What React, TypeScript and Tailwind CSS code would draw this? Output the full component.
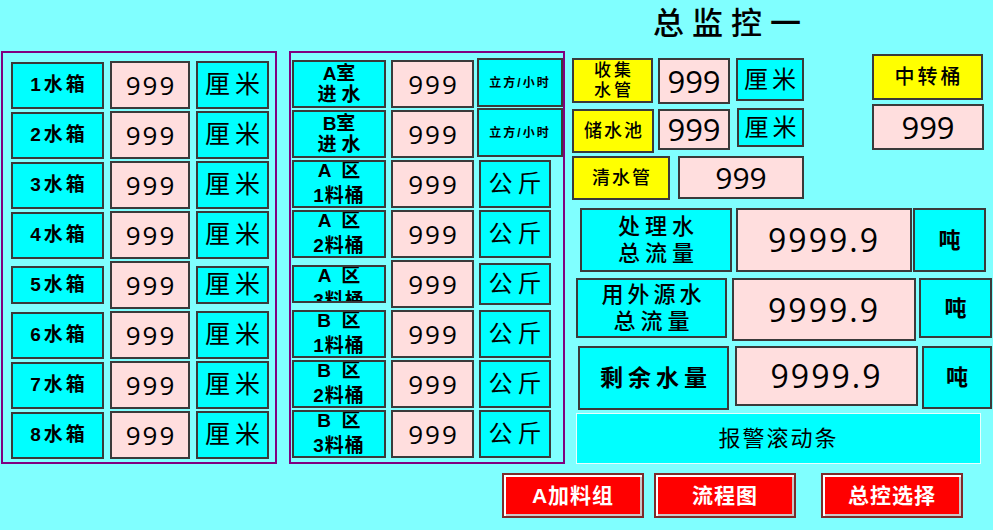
import React from "react";

// Panel colours of the monitoring screen
const cjk = "font-['Liberation_Sans','Noto_Sans_CJK_SC',sans-serif]";
const num = "font-['Open_Sans','DejaVu_Sans',sans-serif] font-medium";
const box = "flex shrink-0 items-center justify-center border-2 border-[#3a3a3a] overflow-hidden whitespace-nowrap";
const cyan = "bg-[#00ffff]";
const pink = "bg-[#ffdede]";
const yellow = "bg-[#ffff00]";

type Cell = { cls?: string; children?: React.ReactNode };

const Box = ({ cls = "", children }: Cell) => <div className={`${box} ${cls}`}>{children}</div>;

const Num = ({ v, cls = "text-[26px] tracking-[2px] pl-[2px]" }: { v: string; cls?: string }) => (
    <span className={`${num} ${cls} leading-none text-black`}>{v}</span>
);

// left panel: water tanks
const tanks = [1, 2, 3, 4, 5, 6, 7, 8];

// middle panel: inlet flows and material bins
const bins = [
    { a: "A室", b: "进水", unit: "立方/小时" },
    { a: "B室", b: "进水", unit: "立方/小时" },
    { a: "A  区", b: "1料桶", unit: "公斤" },
    { a: "A  区", b: "2料桶", unit: "公斤" },
    { a: "A  区", b: "3料桶", unit: "公斤" },
    { a: "B  区", b: "1料桶", unit: "公斤" },
    { a: "B  区", b: "2料桶", unit: "公斤" },
    { a: "B  区", b: "3料桶", unit: "公斤" },
];

const Button = ({ label }: { label: string }) => (
    <div className="w-[142px] h-[45px] border-2 border-[#7f2a2a] bg-[#ff0000] shadow-[inset_2px_2px_0_#ffffff,inset_-2px_-2px_0_#c8c8c8] flex items-center justify-center">
        <span className={`${cjk} text-[21px] font-bold text-white tracking-[1px]`}>{label}</span>
    </div>
);

export default function App() {
    return (
        <div className={`w-[993px] h-[530px] bg-[#80ffff] overflow-hidden ${cjk} text-black`}>
            {/* title */}
            <div className="h-[51px] pl-[653px] pt-[4px]">
                <span className="text-[31px] font-medium tracking-[8px] leading-[40px]">总监控一</span>
            </div>

            <div className="flex h-[413px]">
                {/* water tanks */}
                <div className="ml-[1px] w-[276px] h-[413px] border-2 border-[#800080] pl-[8px] pt-[8px] flex flex-col gap-[2px]">
                    {tanks.map((n) => {
                        const short = n === 5;
                        return (
                            <div key={n} className="flex items-center h-[48px]">
                                <Box cls={`${cyan} w-[93px] ${short ? "h-[38px]" : "h-[47px]"}`}>
                                    <span className="text-[19px] font-bold tracking-[3px] pl-[3px]">{n}水箱</span>
                                </Box>
                                <Box cls={`${pink} ml-[6px] w-[80px] h-[48px]`}>
                                    <Num v="999" />
                                </Box>
                                <Box cls={`${cyan} ml-[6px] w-[73px] ${short ? "h-[38px]" : "h-[48px]"}`}>
                                    <span className="text-[25px] tracking-[5px] pl-[5px]">厘米</span>
                                </Box>
                            </div>
                        );
                    })}
                </div>

                {/* bins */}
                <div className="ml-[12px] w-[276px] h-[413px] border-2 border-[#800080] pl-[1px] pt-[7px] flex flex-col gap-[2px]">
                    {bins.map((r, i) => {
                        const wide = i < 2;
                        const short = i === 4;
                        return (
                            <div key={i} className="flex items-center h-[48px]">
                                <div
                                    className={`${cyan} shrink-0 border-2 border-[#3a3a3a] overflow-hidden w-[94px] ${short ? "h-[38px]" : "h-[48px]"} flex flex-col items-center ${wide ? "justify-center" : "justify-start"}`}
                                >
                                    {wide ? (
                                        <>
                                            <span className="text-[19px] font-bold leading-[21px]">{r.a}</span>
                                            <span className="text-[19px] font-bold leading-[21px] tracking-[5px] pl-[5px]">{r.b}</span>
                                        </>
                                    ) : (
                                        <div className="-mt-[4px] flex flex-col items-center">
                                            <span className="text-[19px] font-bold leading-[25px] whitespace-pre">{r.a}</span>
                                            <span className="text-[19px] font-bold leading-[25px] tracking-[1px]">{r.b}</span>
                                        </div>
                                    )}
                                </div>
                                <Box cls={`${pink} ml-[5px] w-[83px] h-[48px]`}>
                                    <Num v="999" />
                                </Box>
                                {wide ? (
                                    <Box cls={`${cyan} ml-[3px] w-[86px] h-[49px] self-start -mt-[2px]`}>
                                        <span className="text-[12px] font-bold tracking-[2px]">{r.unit}</span>
                                    </Box>
                                ) : (
                                    <Box cls={`${cyan} ml-[5px] w-[72px] ${short ? "h-[42px]" : "h-[48px]"}`}>
                                        <span className="text-[24px] tracking-[5px] pl-[5px]">{r.unit}</span>
                                    </Box>
                                )}
                            </div>
                        );
                    })}
                </div>

                {/* right side: pipes, pool and totals */}
                <div className="ml-[7px] w-[421px] pt-[3px] flex flex-col">
                    <div className="flex">
                        <div className="w-[232px] pt-[4px] flex flex-col gap-[5px]">
                            <div className="flex items-start">
                                <div className={`${yellow} w-[81px] h-[45px] border-2 border-[#3a3a3a] flex flex-col items-center justify-center`}>
                                    <span className="text-[17px] font-medium leading-[20px] tracking-[3px] pl-[3px]">收集</span>
                                    <span className="text-[17px] font-medium leading-[20px] tracking-[3px] pl-[3px]">水管</span>
                                </div>
                                <Box cls={`${pink} ml-[5px] w-[72px] h-[46px]`}>
                                    <Num v="999" cls="text-[31px]" />
                                </Box>
                                <Box cls={`${cyan} ml-[6px] w-[68px] h-[43px]`}>
                                    <span className="text-[24px] tracking-[4px] pl-[4px]">厘米</span>
                                </Box>
                            </div>
                            <div className="flex items-start">
                                <Box cls={`${yellow} w-[82px] h-[44px]`}>
                                    <span className="text-[18px] font-medium tracking-[2px] pl-[2px]">储水池</span>
                                </Box>
                                <Box cls={`${pink} ml-[4px] w-[72px] h-[41px]`}>
                                    <Num v="999" cls="text-[31px]" />
                                </Box>
                                <Box cls={`${cyan} ml-[7px] w-[67px] h-[39px] -mt-[1px]`}>
                                    <span className="text-[24px] tracking-[4px] pl-[4px]">厘米</span>
                                </Box>
                            </div>
                        </div>
                        <div className="ml-[68px] w-[112px] flex flex-col gap-[4px]">
                            <Box cls={`${yellow} w-[111px] h-[46px]`}>
                                <span className="text-[20px] font-medium tracking-[3px] pl-[3px]">中转桶</span>
                            </Box>
                            <Box cls={`${pink} w-[112px] h-[46px]`}>
                                <Num v="999" cls="text-[31px]" />
                            </Box>
                        </div>
                    </div>

                    <div className="flex mt-[3px]">
                        <Box cls={`${yellow} w-[98px] h-[44px]`}>
                            <span className="text-[18px] font-medium tracking-[2px] pl-[2px]">清水管</span>
                        </Box>
                        <Box cls={`${pink} ml-[8px] w-[126px] h-[43px]`}>
                            <Num v="999" cls="text-[30px]" />
                        </Box>
                    </div>

                    <div className="flex mt-[8px] ml-[8px]">
                        <div className={`${cyan} w-[152px] h-[64px] border-2 border-[#3a3a3a] flex flex-col items-center justify-center`}>
                            <span className="text-[22px] font-medium leading-[27px] tracking-[5px] pl-[5px]">处理水</span>
                            <span className="text-[22px] font-medium leading-[27px] tracking-[5px] pl-[5px]">总流量</span>
                        </div>
                        <Box cls={`${pink} ml-[4px] w-[176px] h-[64px]`}>
                            <Num v="9999.9" cls="text-[32px] tracking-[2px]" />
                        </Box>
                        <Box cls={`${cyan} ml-[1px] w-[73px] h-[64px]`}>
                            <span className="text-[22px] font-bold">吨</span>
                        </Box>
                    </div>

                    <div className="flex items-start mt-[6px] ml-[4px]">
                        <div className={`${cyan} w-[151px] h-[60px] border-2 border-[#3a3a3a] flex flex-col items-center justify-center`}>
                            <span className="text-[22px] font-medium leading-[27px] tracking-[4px] pl-[4px]">用外源水</span>
                            <span className="text-[22px] font-medium leading-[27px] tracking-[5px] pl-[5px]">总流量</span>
                        </div>
                        <Box cls={`${pink} ml-[5px] w-[184px] h-[63px]`}>
                            <Num v="9999.9" cls="text-[32px] tracking-[2px]" />
                        </Box>
                        <Box cls={`${cyan} ml-[3px] w-[73px] h-[60px]`}>
                            <span className="text-[22px] font-bold">吨</span>
                        </Box>
                    </div>

                    <div className="flex items-start mt-[5px] ml-[6px]">
                        <Box cls={`${cyan} w-[151px] h-[64px]`}>
                            <span className="text-[23px] font-bold tracking-[5px] pl-[5px]">剩余水量</span>
                        </Box>
                        <Box cls={`${pink} ml-[6px] w-[183px] h-[60px]`}>
                            <Num v="9999.9" cls="text-[32px] tracking-[2px]" />
                        </Box>
                        <Box cls={`${cyan} ml-[4px] w-[70px] h-[63px]`}>
                            <span className="text-[22px] font-bold">吨</span>
                        </Box>
                    </div>

                    {/* alarm ticker */}
                    <div className="mt-[3px] ml-[4px] w-[405px] h-[53px] bg-[#00ffff] border border-[#e6ffff] flex items-center justify-center">
                        <span className="text-[22px] tracking-[2px]">报警滚动条</span>
                    </div>
                </div>
            </div>

            {/* navigation */}
            <div className="flex pl-[502px] pt-[9px]">
                <Button label="A加料组" />
                <div className="ml-[10px]">
                    <Button label="流程图" />
                </div>
                <div className="ml-[25px]">
                    <Button label="总控选择" />
                </div>
            </div>
        </div>
    );
}
